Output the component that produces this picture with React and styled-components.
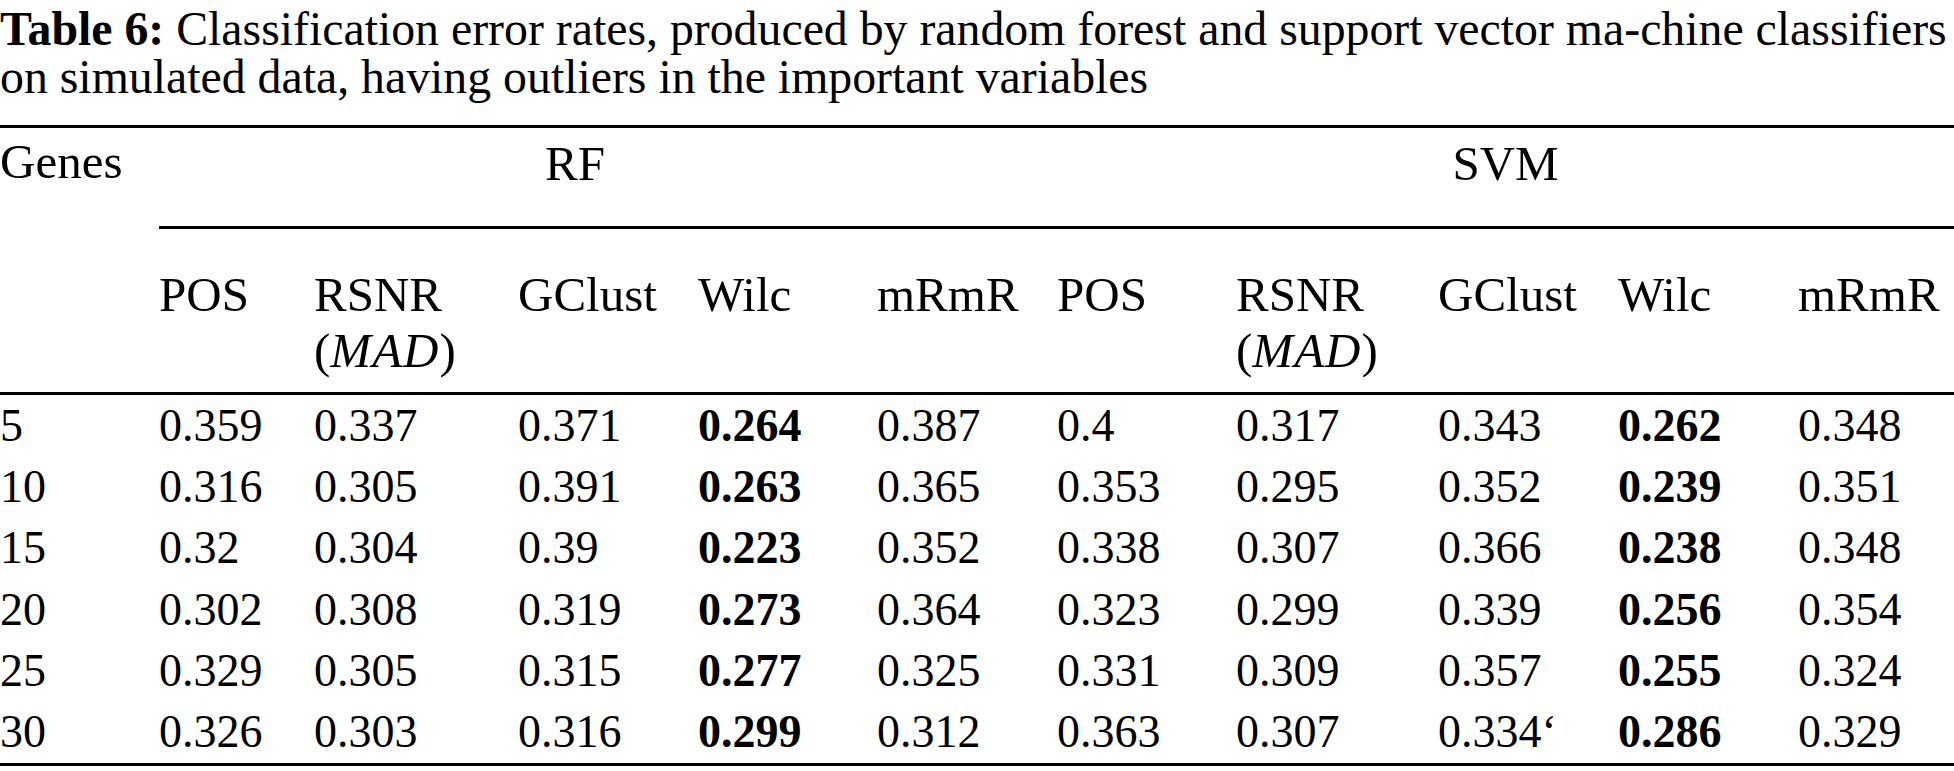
import React from "react";
import styled, { createGlobalStyle } from "styled-components";

const GlobalStyle = createGlobalStyle`
  html, body {
    margin: 0;
    padding: 0;
    background: #ffffff;
  }
  body {
    font-family: "Liberation Serif", "Times New Roman", serif;
    color: #000000;
    width: 1954px;
    height: 771px;
    overflow: hidden;
  }
`;

const Page = styled.div`
  width: 1954px;
  display: flex;
  flex-direction: column;
`;

const Caption = styled.div`
  padding-top: 5px;
  font-size: 47.8px;
  line-height: 48px;
  white-space: nowrap;
  color: #000;
`;

const Label = styled.span`
  font-weight: 700;
`;

const Table = styled.div`
  margin-top: 24px;
  display: grid;
  grid-template-columns: 159px 155px 204px 180px 179px 180px 179px 202px 180px 180px 1fr;
  grid-template-rows: 101px 166px repeat(6, 61.33px);
  border-top: 3px solid #000;
  border-bottom: 3px solid #000;
  font-size: 46px;
`;

const StubHead = styled.div`
  grid-row: 1 / span 2;
  grid-column: 1;
  padding-top: 5px;
  font-size: 49px;
  line-height: 58px;
  border-bottom: 3px solid #000;
`;

const GroupHead = styled.div`
  grid-row: 1;
  grid-column: ${(p) => p.$start} / span 5;
  padding-top: 7px;
  padding-right: ${(p) => p.$shift || 0}px;
  font-size: 49px;
  line-height: 58px;
  text-align: center;
  border-bottom: 3px solid #000;
`;

const SubHead = styled.div`
  grid-row: 2;
  padding-top: 38px;
  font-size: 49px;
  line-height: 56px;
  border-bottom: 3px solid #000;
`;

const Math = styled.i`
  font-style: italic;
  letter-spacing: 1px;
`;

const Cell = styled.div`
  display: flex;
  align-items: center;
  line-height: 58px;
  font-weight: ${(p) => (p.$bold ? 700 : 400)};
`;

const methods = ["POS", "RSNR", "GClust", "Wilc", "mRmR"];

const rows = [
  ["5", "0.359", "0.337", "0.371", "0.264", "0.387", "0.4", "0.317", "0.343", "0.262", "0.348"],
  ["10", "0.316", "0.305", "0.391", "0.263", "0.365", "0.353", "0.295", "0.352", "0.239", "0.351"],
  ["15", "0.32", "0.304", "0.39", "0.223", "0.352", "0.338", "0.307", "0.366", "0.238", "0.348"],
  ["20", "0.302", "0.308", "0.319", "0.273", "0.364", "0.323", "0.299", "0.339", "0.256", "0.354"],
  ["25", "0.329", "0.305", "0.315", "0.277", "0.325", "0.331", "0.309", "0.357", "0.255", "0.324"],
  ["30", "0.326", "0.303", "0.316", "0.299", "0.312", "0.363", "0.307", "0.334\u2018", "0.286", "0.329"],
];

const boldCols = new Set([4, 9]);

function MethodLabel({ name }) {
  if (name === "RSNR") {
    return (
      <>
        RSNR
        <br />(<Math>MAD</Math>)
      </>
    );
  }
  return name;
}

export default function App() {
  return (
    <Page>
      <GlobalStyle />
      <Caption>
        <Label>Table 6:</Label> Classification error rates, produced by random forest and support vector ma-chine classifiers
        <br />
        on simulated data, having outliers in the important variables
      </Caption>
      <Table>
        <StubHead>Genes</StubHead>
        <GroupHead $start={2} $shift={66}>RF</GroupHead>
        <GroupHead $start={7}>SVM</GroupHead>
        {[...methods, ...methods].map((m, i) => (
          <SubHead key={"h" + i}>
            <MethodLabel name={m} />
          </SubHead>
        ))}
        {rows.map((r, ri) =>
          r.map((v, ci) => (
            <Cell key={ri + "-" + ci} $bold={boldCols.has(ci)}>
              {v}
            </Cell>
          ))
        )}
      </Table>
    </Page>
  );
}
